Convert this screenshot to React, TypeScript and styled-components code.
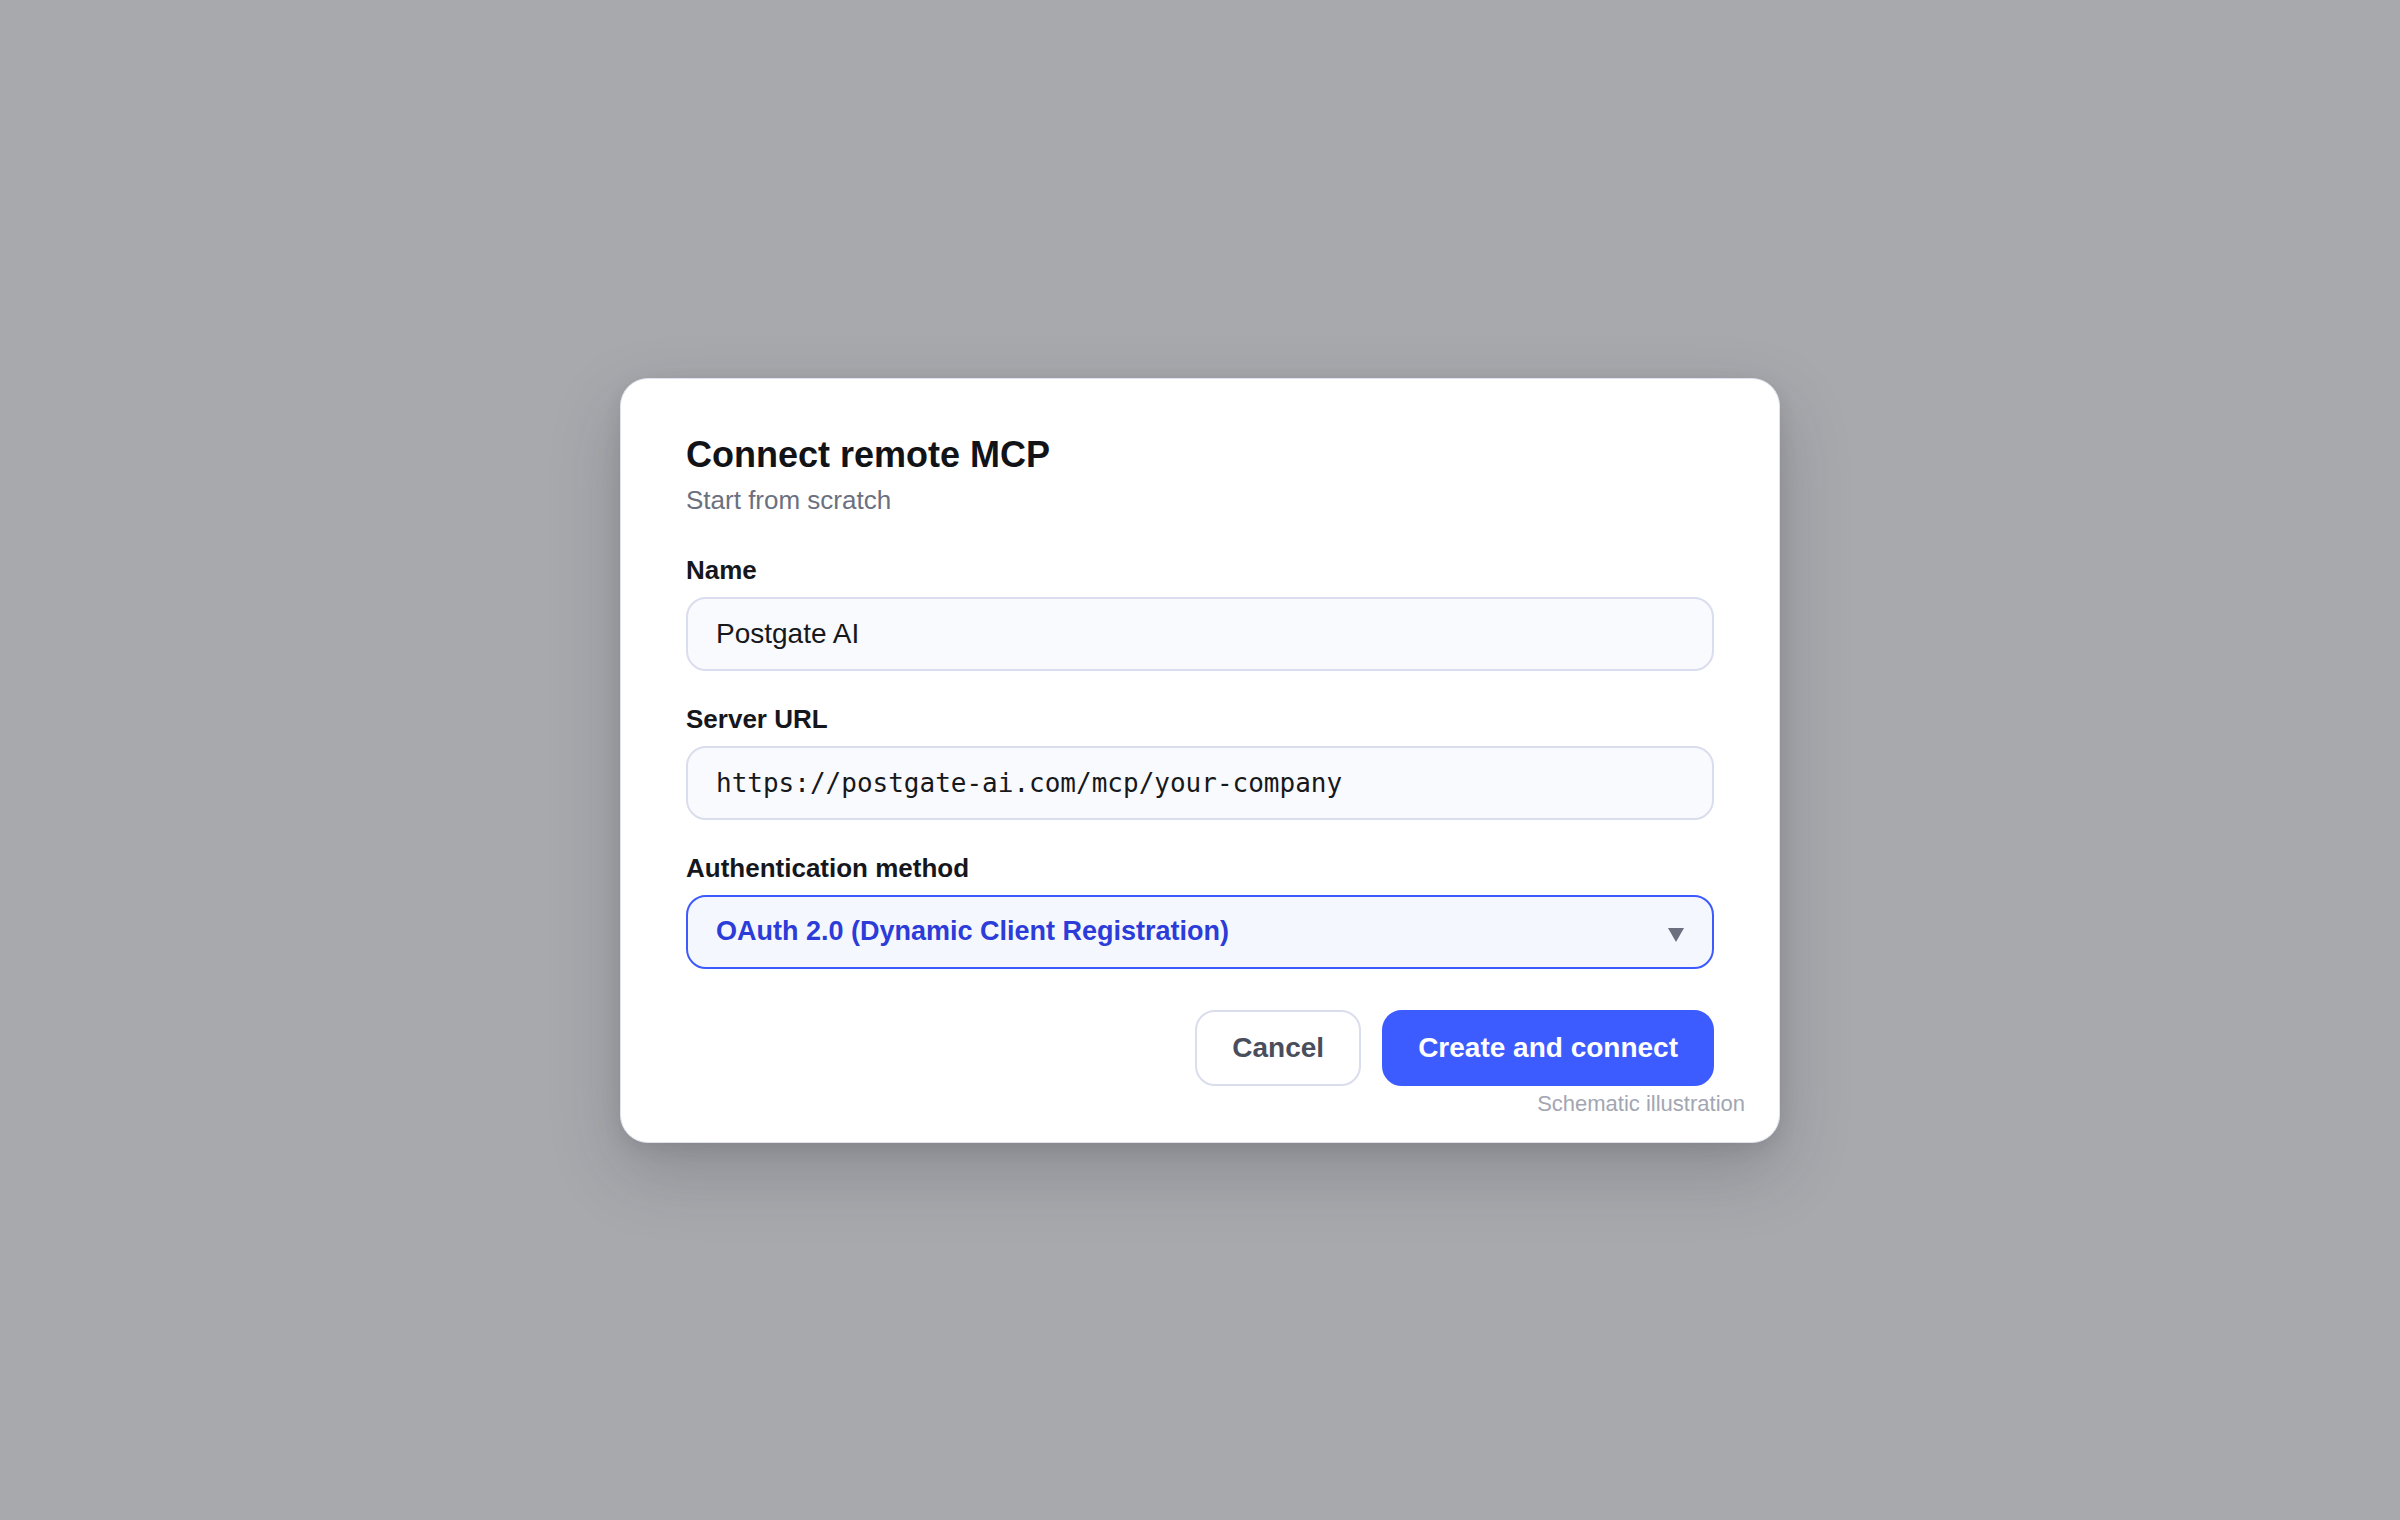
import React from "react";
import styled, { createGlobalStyle } from "styled-components";

const GlobalStyle = createGlobalStyle`
  * { box-sizing: border-box; }
  html, body { margin: 0; padding: 0; }
  body {
    background: #a8a9ad;
    font-family: "Liberation Sans", Arial, sans-serif;
  }
`;

const Backdrop = styled.div`
  width: 100vw;
  height: 100vh;
  display: flex;
  align-items: center;
  justify-content: center;
  background: #a8a9ad;
`;

const Card = styled.div`
  position: relative;
  width: 1160px;
  background: #ffffff;
  border: 1.5px solid #dfe2ee;
  border-radius: 28px;
  padding: 54px 65px 56px;
  box-shadow: 0 28px 70px rgba(40, 42, 50, 0.22), 0 6px 18px rgba(40, 42, 50, 0.1);
  display: flex;
  flex-direction: column;
`;

const Title = styled.h1`
  margin: 0;
  font-size: 36px;
  line-height: 44px;
  font-weight: 700;
  color: #121317;
  letter-spacing: 0;
`;

const Subtitle = styled.p`
  margin: 7px 0 0;
  font-size: 26px;
  line-height: 32px;
  color: #6b7080;
`;

const Fields = styled.div`
  margin-top: 38px;
  display: flex;
  flex-direction: column;
  gap: 32px;
`;

const Field = styled.div`
  display: flex;
  flex-direction: column;
  gap: 11px;
`;

const Label = styled.label`
  font-size: 26px;
  line-height: 32px;
  font-weight: 700;
  color: #15171c;
`;

const Input = styled.div<{ $mono?: boolean }>`
  height: 74px;
  display: flex;
  align-items: center;
  padding: 0 28px;
  border: 2px solid #dadded;
  border-radius: 20px;
  background: #f9fafd;
  color: #17181c;
  font-family: ${(p) =>
    p.$mono ? '"DejaVu Sans Mono", "Liberation Mono", monospace' : '"Liberation Sans", Arial, sans-serif'};
  font-size: ${(p) => (p.$mono ? "26px" : "28px")};
`;

const Select = styled.div`
  height: 74px;
  display: flex;
  align-items: center;
  justify-content: space-between;
  padding: 0 28px 0 28px;
  border: 2px solid #3d5afe;
  border-radius: 20px;
  background: #f5f7ff;
  color: #2c3cd8;
  font-size: 27px;
  font-weight: 700;
`;

const Caret = styled.svg`
  width: 16px;
  height: 14px;
  margin-top: 6px;
  flex: none;
`;

const Actions = styled.div`
  margin-top: 41px;
  display: flex;
  justify-content: flex-end;
  gap: 21px;
`;

const Button = styled.button<{ $primary?: boolean }>`
  height: 76px;
  padding: 0 ${(p) => (p.$primary ? "34px" : "35px")};
  border-radius: 20px;
  border: 2px solid ${(p) => (p.$primary ? "#3d5cff" : "#dadded")};
  background: ${(p) => (p.$primary ? "#3d5cff" : "#ffffff")};
  color: ${(p) => (p.$primary ? "#ffffff" : "#4a4e5c")};
  font-family: "Liberation Sans", Arial, sans-serif;
  font-size: 28px;
  font-weight: 700;
  cursor: pointer;
`;

const Caption = styled.span`
  position: absolute;
  right: 34px;
  bottom: 26px;
  font-size: 22px;
  line-height: 25px;
  color: #a2a6b2;
`;

export default function App() {
  return (
    <>
      <GlobalStyle />
      <Backdrop>
        <Card>
          <Title>Connect remote MCP</Title>
          <Subtitle>Start from scratch</Subtitle>
          <Fields>
            <Field>
              <Label>Name</Label>
              <Input>Postgate AI</Input>
            </Field>
            <Field>
              <Label>Server URL</Label>
              <Input $mono>https://postgate-ai.com/mcp/your-company</Input>
            </Field>
            <Field>
              <Label>Authentication method</Label>
              <Select>
                <span>OAuth 2.0 (Dynamic Client Registration)</span>
                <Caret viewBox="0 0 16 14">
                  <polygon points="0,0 16,0 8,14" fill="#6b6f7e" />
                </Caret>
              </Select>
            </Field>
          </Fields>
          <Actions>
            <Button>Cancel</Button>
            <Button $primary>Create and connect</Button>
          </Actions>
          <Caption>Schematic illustration</Caption>
        </Card>
      </Backdrop>
    </>
  );
}
